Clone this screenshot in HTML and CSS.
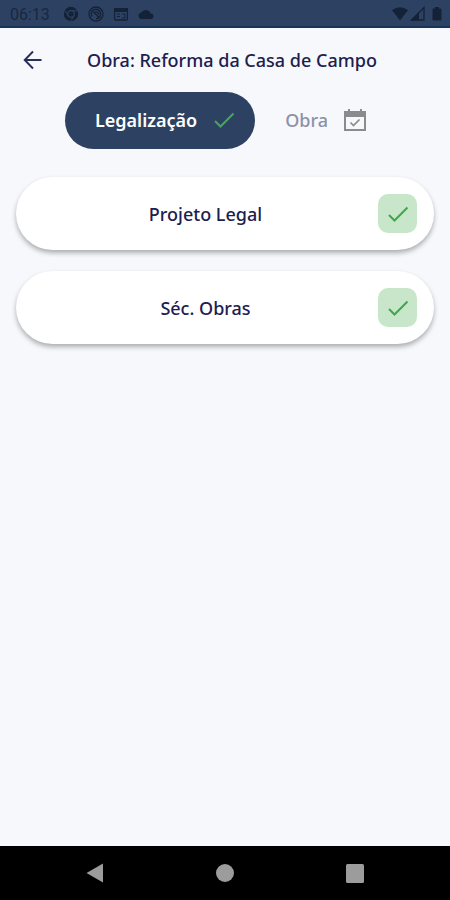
FILE: index.html
```html
<!DOCTYPE html>
<html lang="pt-BR">
<head>
<meta charset="utf-8">
<meta name="viewport" content="width=device-width, initial-scale=1">
<title>Obra: Reforma da Casa de Campo</title>
<link rel="stylesheet" href="styles.css">
</head>
<body>
<div class="status">
  <span class="time">06:13</span>
  <svg class="status-icon" viewBox="0 0 16 16" aria-hidden="true"><circle cx="8" cy="8" r="7.2" fill="#142238"/><circle cx="8" cy="8" r="3.3" fill="none" stroke="#2d4263" stroke-width="1.2"/><path d="M8 4.7h6.2M5.1 9.7 2.2 4.8M10.9 9.7 8 14.8" stroke="#2d4263"/></svg>
  <svg class="status-icon" viewBox="0 0 16 16" fill="none" stroke="#142238" aria-hidden="true"><circle cx="8" cy="8" r="7" stroke-width="1.3"/><path d="M4 10.5A4.7 4.7 0 1 1 8 12.7" stroke-width="1.4"/><path d="M5.5 6.2h3.2a2 2 0 0 1 1.6 2.6M5.5 6.2l6 5.6" stroke-width="1.3"/></svg>
  <svg class="status-icon" viewBox="0 0 16 16" aria-hidden="true"><rect x="1.6" y="2.6" width="12.8" height="11.4" rx="1" fill="none" stroke="#142238" stroke-width="1.3"/><path d="M1 2h14v4H1z" fill="#142238"/><path d="M4 8h3M4 10.5h3M9 8h3v4H9" fill="none" stroke="#142238"/></svg>
  <svg class="status-icon" viewBox="0 0 16 16" aria-hidden="true"><path d="M3.5 13a3.3 3.3 0 0 1-.3-6.500A5.2 5.2 0 0 1 12.6 7.400a2.8 2.8 0 0 1 .2 5.600z" fill="#142238"/></svg>
  <span class="spacer"></span>
  <svg class="status-icon" viewBox="0 0 16 16" aria-hidden="true"><path d="M0 4.2Q8-1.8 16 4.2L8 14.5z" fill="#142238"/></svg>
  <svg class="status-icon" viewBox="0 0 16 16" aria-hidden="true"><path d="M1.5 14 14 1.5V14z" fill="none" stroke="#142238" stroke-width="1.3"/><path d="M1 14.5 9 6.5v8z" fill="#142238"/></svg>
  <svg class="battery" viewBox="0 0 10 16" aria-hidden="true"><path d="M3 1h4v1.5h1.5q1 0 1 1v10q0 1-1 1h-7q-1 0-1-1v-10q0-1 1-1H3z" fill="#142238"/></svg>
</div>

<header class="header">
  <button class="back" aria-label="Voltar"><svg viewBox="0 0 20 20" aria-hidden="true"><path d="M18.5 10H2M10 1.5 1.7 10l8.3 8.5" fill="none" stroke="#292d59" stroke-width="1.9"/></svg></button>
  <h1>Obra: Reforma da Casa de Campo</h1>
</header>

<nav class="tabs">
  <button class="tab active">Legalização
    <svg class="tab-check" viewBox="0 0 22 22" aria-hidden="true"><path d="m2 12 5.5 5.5L20.5 4.5" fill="none" stroke="#45a852" stroke-width="2"/></svg>
  </button>
  <button class="tab">Obra
    <svg class="tab-check" viewBox="0 0 22 22" fill="none" stroke="#8b8b8d" aria-hidden="true"><path d="M0 2h22v20H0z" fill="#8b8b8d" stroke="none"/><path d="M2 8h18v12H2z" fill="#f6f8fb" stroke="none"/><path d="M5 0v4M17 0v4" stroke-width="2"/><path d="m6.5 13.5 3 3 6-6" stroke-width="1.7"/></svg>
  </button>
</nav>

<main class="list">
  <button class="card">
    <span class="label">Projeto Legal</span>
    <span class="badge"><svg viewBox="0 0 22 22" aria-hidden="true"><path d="m2 12 5.5 5.5L20.5 4.5" fill="none" stroke="#3da94b" stroke-width="2"/></svg></span>
  </button>
  <button class="card">
    <span class="label">Séc. Obras</span>
    <span class="badge"><svg viewBox="0 0 22 22" aria-hidden="true"><path d="m2 12 5.5 5.5L20.5 4.5" fill="none" stroke="#3da94b" stroke-width="2"/></svg></span>
  </button>
</main>

<footer class="system">
  <button aria-label="Voltar"><svg viewBox="0 0 20 20" aria-hidden="true"><path d="M18 .5v19L1.5 10z" fill="#9c9c9c"/></svg></button>
  <button aria-label="Início"><svg viewBox="0 0 20 20" aria-hidden="true"><circle cx="10" cy="10" r="9" fill="#9c9c9c"/></svg></button>
  <button aria-label="Recentes"><svg viewBox="0 0 20 20" aria-hidden="true"><rect x="1" y="1" width="18" height="19" rx="1.5" fill="#9c9c9c"/></svg></button>
</footer>
</body>
</html>
```
FILE: styles.css
```css
* { box-sizing: border-box; }

body {
  margin: 0;
  min-height: 100vh;
  display: flex;
  flex-direction: column;
  background: #f6f8fb;
  color: #1c2050;
  font-family: "Noto Sans", sans-serif;
  font-size: 18px;
  font-weight: 500;
}

button {
  border: 0;
  padding: 0;
  background: none;
  color: inherit;
  font: inherit;
  cursor: pointer;
}

svg { display: block; flex: none; }

.status {
  display: flex;
  align-items: center;
  gap: 9px;
  height: 28px;
  padding: 2px 8px 0 10px;
  background: #2d4263;
  border-bottom: 2px solid #173459;
  color: #172740;
}

.time {
  margin-right: 4px;
  font-family: Roboto, sans-serif;
  font-size: 16px;
  font-weight: 400;
}

.status-icon { width: 16px; height: 16px; }
.status-icon + .status-icon:nth-last-child(2) { margin-left: -7px; }
.battery { width: 10px; height: 16px; margin-left: -3px; }
.spacer { flex: 1; }

.header {
  display: flex;
  align-items: center;
  height: 64px;
  padding: 0 29px 0 23px;
}

.back svg { width: 20px; height: 20px; }

h1 {
  flex: 1;
  margin: 0;
  font-size: 18px;
  font-weight: 500;
  text-align: center;
}

.tabs {
  display: flex;
  justify-content: center;
  padding-left: 11px;
}

.tab {
  display: flex;
  align-items: center;
  gap: 16px;
  height: 57px;
  padding: 0 30px 2px;
  border-radius: 29px;
  color: #8d91a8;
}

.tab.active {
  padding-right: 20px;
  background: #2d4263;
  color: #fff;
  font-weight: 600;
}

.tab-check { width: 22px; height: 22px; }

.list {
  display: flex;
  flex-direction: column;
  gap: 21px;
  padding: 28px 16px;
}

.card {
  display: flex;
  align-items: center;
  height: 73px;
  padding: 0 17px;
  border-radius: 37px;
  background: #fff;
  box-shadow: 0 3px 5px rgb(0 0 0 / 30%);
}

.label { flex: 1; }

.badge {
  display: grid;
  place-items: center;
  width: 39px;
  height: 39px;
  border-radius: 10px;
  background: #c8e6c9;
}

.badge svg { width: 22px; height: 22px; }

.system {
  display: flex;
  justify-content: space-around;
  align-items: center;
  height: 54px;
  margin-top: auto;
  padding: 0 30px;
  background: #000;
}

.system svg { width: 20px; height: 20px; }
```
